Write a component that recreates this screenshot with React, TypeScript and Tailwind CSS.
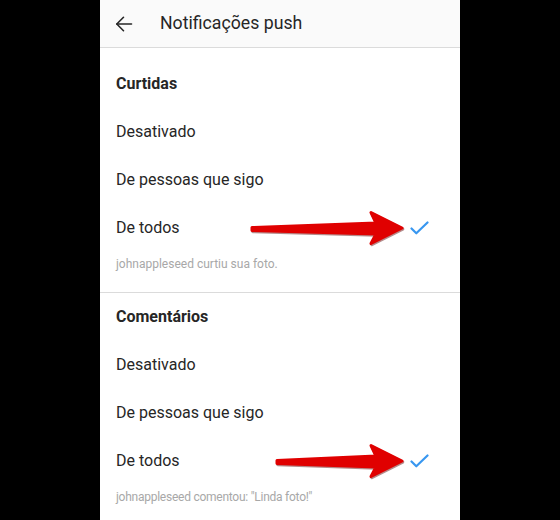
import React from 'react'

type Section = {
  title: string
  caption: string
  tail: number
  tight: boolean
}

const SECTIONS: Section[] = [
  { title: 'Curtidas', caption: 'johnappleseed curtiu sua foto.', tail: 152, tight: false },
  { title: 'Comentários', caption: 'johnappleseed comentou: "Linda foto!"', tail: 177, tight: true },
]

const OPTIONS = ['Desativado', 'De pessoas que sigo', 'De todos']

function BackArrow() {
  return (
    <svg width="18" height="18" viewBox="0 0 18 18" fill="none" stroke="#262626" strokeWidth="1.6" strokeLinecap="round" strokeLinejoin="round">
      <path d="M16.5 9H1.8" />
      <path d="M8.5 2.3L1.8 9l6.7 6.7" />
    </svg>
  )
}

function Check() {
  return (
    <svg width="19" height="14" viewBox="0 0 19 14" fill="none" stroke="#3897f0" strokeWidth="2.2" strokeLinecap="round" strokeLinejoin="round">
      <path d="M1.5 7.5l4.8 4.8L17.5 1.5" />
    </svg>
  )
}

// red annotation arrow laid over the selected row
function RedArrow({ tail }: { tail: number }) {
  const shape = `M${tail},23.5 L276,19 L271,8.5 L302,24 L271,39.5 L276,30 L${tail},26.5 Z`
  return (
    <svg className="absolute inset-0 pointer-events-none" width="360" height="48" viewBox="0 0 360 48">
      <path d={shape} transform="translate(0.8,1.2)" fill="#5a0000" stroke="#5a0000" strokeWidth="3" strokeLinejoin="round" opacity="0.45" />
      <path d={shape} fill="#e00000" stroke="#e00000" strokeWidth="3" strokeLinejoin="round" />
    </svg>
  )
}

function NotificationSection({ section, first }: { section: Section; first: boolean }) {
  return (
    <div className={first ? 'pt-[12px]' : 'border-t border-[#dbdbdb]'}>
      <div className="h-12 flex items-center px-4 text-[16px] font-bold text-[#262626]">
        {section.title}
      </div>
      {OPTIONS.map((opt, i) => {
        const selected = i === OPTIONS.length - 1
        return (
          <div key={opt} className="relative h-12 flex items-center justify-between pl-4 pr-[31px] text-[16px] text-[#262626]">
            <span>{opt}</span>
            {selected && <Check />}
            {selected && <RedArrow tail={section.tail} />}
          </div>
        )
      })}
      <div
        className={`px-4 pt-[4px] pb-[20px] text-[12px] leading-4 text-[#a8a8a8] ${section.tight ? 'tracking-[-0.25px]' : ''}`}
      >
        {section.caption}
      </div>
    </div>
  )
}

export default function App() {
  return (
    <div className="w-[560px] h-[520px] bg-black flex justify-center overflow-hidden" style={{ fontFamily: 'Roboto, "Noto Sans", sans-serif' }}>
      <div className="w-[360px] h-full bg-white flex flex-col">
        <div className="h-12 shrink-0 bg-[#fafafa] border-b border-[#dbdbdb] flex items-center">
          <div className="w-[60px] pl-[15px] flex items-center">
            <BackArrow />
          </div>
          <span className="text-[17.7px] text-[#262626]">Notificações push</span>
        </div>
        {SECTIONS.map((s, i) => (
          <NotificationSection key={s.title} section={s} first={i === 0} />
        ))}
      </div>
    </div>
  )
}
